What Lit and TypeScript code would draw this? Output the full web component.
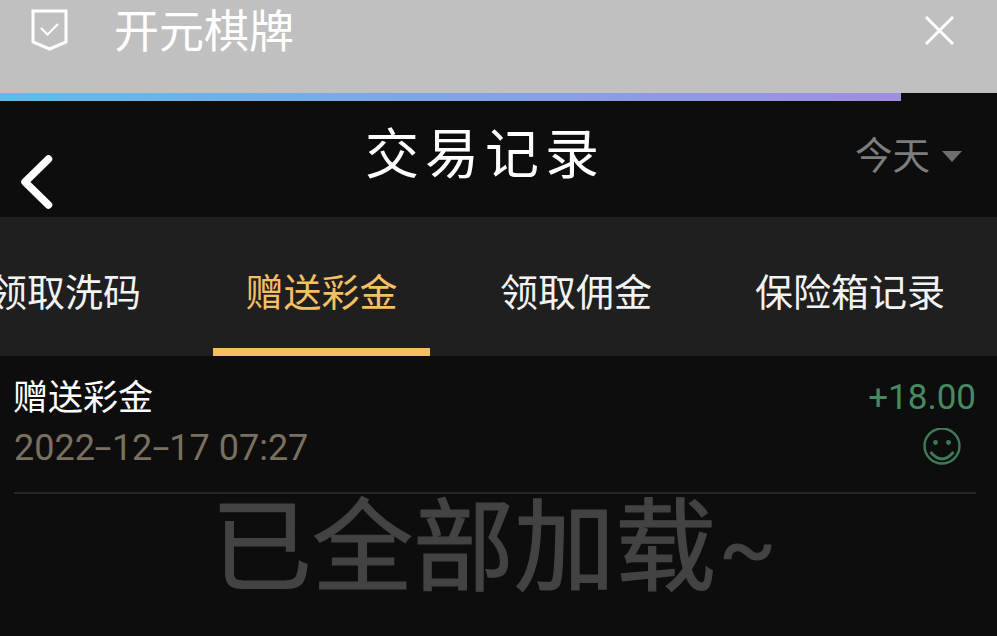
import { LitElement, html, css, svg } from "lit";
import { customElement } from "lit/decorators.js";

const back = svg`<path d="M32.500 4 L9 27 L32.500 50" fill="none" stroke="#fff" stroke-width="7.500" stroke-linecap="round" stroke-linejoin="round"/>`;
const closeIcon = svg`<path d="M2 2 L29 29 M29 2 L2 29" stroke="#fff" stroke-width="3" fill="none"/>`;
const shield = svg`<path d="M2 2 H35 V33 L18.500 40 L2 33 Z" fill="none" stroke="#fff" stroke-width="3"/>
  <path d="M10 19 L16.500 25.500 L27 15" fill="none" stroke="#fff" stroke-width="2.200"/>`;
const smile = svg`<circle cx="19" cy="18" r="17.500" fill="none" stroke="#3f7a57" stroke-width="2.400"/>
  <circle cx="12.500" cy="14.500" r="2.400" fill="#3f7a57"/>
  <circle cx="25.500" cy="14.500" r="2.400" fill="#3f7a57"/>
  <path d="M7.500 24 Q19 38 30.500 24" fill="none" stroke="#3f7a57" stroke-width="2.800"/>`;

@customElement("app-root")
export class AppRoot extends LitElement {
  static styles = css`
    :host {
      display: block;
      width: 997px;
      height: 636px;
      overflow: hidden;
      background: #0d0d0d;
      font-family: Roboto, "Noto Sans CJK SC", sans-serif;
    }

    .browser {
      height: 93px;
      background: #c0c0c0;
      display: flex;
      align-items: flex-start;
      box-sizing: border-box;
      padding: 10px 42px 0 31px;
    }

    .browser .shield {
      width: 37px;
      height: 43px;
      margin-top: -1px;
    }

    .browser .title {
      margin: 1px 0 0 46px;
      font-size: 45px;
      line-height: 44px;
      color: #fff;
      flex: 1;
    }

    .browser .close {
      width: 31px;
      height: 31px;
      margin-top: 5px;
    }

    .progress {
      height: 8px;
      width: 901px;
      background: linear-gradient(90deg, #62bde3, #a08fdc);
    }

    .header {
      height: 116px;
      display: grid;
      grid-template-columns: 365px auto 1fr;
      align-items: start;
    }

    .back {
      width: 40px;
      height: 54px;
      margin: 54px 0 0 16px;
    }

    .heading {
      font-size: 54px;
      line-height: 60px;
      letter-spacing: 6px;
      color: #fff;
      margin-top: 25px;
    }

    .range {
      justify-self: end;
      display: flex;
      align-items: center;
      gap: 12px;
      margin: 34px 35px 0 0;
      font-size: 37.500px;
      line-height: 42px;
      color: #7d7d7d;
    }

    .caret {
      width: 0;
      height: 0;
      border-left: 10px solid transparent;
      border-right: 10px solid transparent;
      border-top: 11px solid #6e6e6e;
    }

    .tabs {
      height: 139px;
      margin-left: -11px;
      background: #1f1f1f;
      display: flex;
    }

    .tab {
      flex: none;
      box-sizing: border-box;
      height: 139px;
      padding-top: 52px;
      font-size: 38px;
      line-height: 48px;
      color: #f2f2f2;
      white-space: nowrap;
    }

    .tab.wash {
      width: 224px;
    }

    .tab.active {
      width: 217px;
      text-align: center;
      color: #f5bf62;
      border-bottom: 8px solid #f5bf62;
    }

    .tab.commission {
      width: 325px;
      padding-left: 70px;
    }

    .tab.safe {
      width: 241px;
    }

    .record {
      margin: 0 21px 0 14px;
      height: 138px;
      box-sizing: border-box;
      border-bottom: 2px solid #262626;
      display: flex;
      justify-content: space-between;
    }

    .record .name {
      font-size: 35px;
      line-height: 44px;
      color: #fff;
      margin: 21px 0 0 -1px;
    }

    .record .date {
      font-size: 36px;
      line-height: 44px;
      color: #7a705f;
      margin-top: 5px;
    }

    .date .dash {
      display: inline-block;
      margin: 0 3.500px;
      transform: scaleX(1.700);
    }

    .right {
      display: flex;
      flex-direction: column;
      align-items: flex-end;
    }

    .amount {
      font-size: 35px;
      line-height: 44px;
      color: #468a62;
      margin-top: 20px;
    }

    .smile {
      width: 38px;
      height: 38px;
      margin: 8px 15px 0 0;
    }

    .done {
      text-align: center;
      font-size: 101px;
      line-height: 100px;
      color: #434343;
      -webkit-text-stroke: 1.200px #434343;
      padding-top: 4px;
      padding-right: 10px;
    }

    .done span {
      font-size: 84px;
      margin-left: 3px;
      vertical-align: 7px;
    }
  `;

  render() {
    return html`
      <div class="browser">
        <svg class="shield" viewBox="0 0 37 43">${shield}</svg>
        <div class="title">开元棋牌</div>
        <svg class="close" viewBox="0 0 31 31">${closeIcon}</svg>
      </div>
      <div class="progress"></div>
      <div class="header">
        <svg class="back" viewBox="0 0 40 54">${back}</svg>
        <div class="heading">交易记录</div>
        <div class="range">今天<span class="caret"></span></div>
      </div>
      <div class="tabs">
        <div class="tab wash">领取洗码</div>
        <div class="tab active">赠送彩金</div>
        <div class="tab commission">领取佣金</div>
        <div class="tab safe">保险箱记录</div>
      </div>
      <div class="record">
        <div>
          <div class="name">赠送彩金</div>
          <div class="date">2022<span class="dash">-</span>12<span class="dash">-</span>17 07:27</div>
        </div>
        <div class="right">
          <div class="amount">+18.00</div>
          <svg class="smile" viewBox="0 0 38 38">${smile}</svg>
        </div>
      </div>
      <div class="done">已全部加载<span>~</span></div>
    `;
  }
}
